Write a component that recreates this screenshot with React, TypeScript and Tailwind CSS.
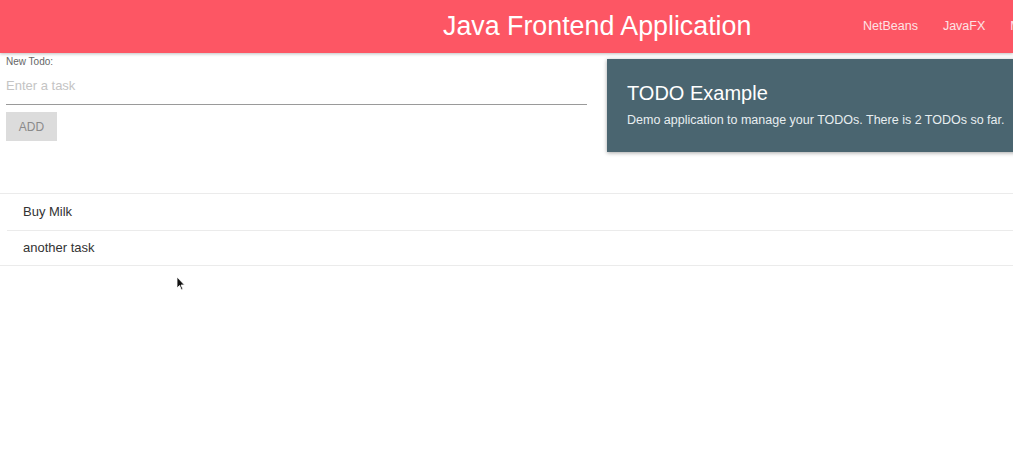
import React from "react";

export default function App() {
  return (
    <div
      className="relative w-[1013px] h-[466px] overflow-hidden bg-white"
      style={{ fontFamily: '"Liberation Sans", Arial, sans-serif' }}
    >
      <header className="h-[53px] bg-[#fd5664] flex items-center shadow-[0_1px_3px_rgba(0,0,0,0.25)] relative z-10">
        <div className="ml-[443px] w-[420px] shrink-0">
          <h1 className="text-[26.8px] leading-none text-white whitespace-nowrap">
            Java Frontend Application
          </h1>
        </div>
        <nav className="flex gap-[25px] text-[12.5px] text-[#fde3e5] whitespace-nowrap">
          <span>NetBeans</span>
          <span>JavaFX</span>
          <span>Maven</span>
        </nav>
      </header>

      <div className="flex">
        <div className="w-[581px] ml-[6px] shrink-0">
          <label className="block mt-[3px] text-[10px] leading-[12px] text-[#666]">
            New Todo:
          </label>
          <div className="h-[37px] border-b border-[#9a9a9a] flex items-center">
            <span className="text-[13px] text-[#c4c4c4]">Enter a task</span>
          </div>
          <button className="mt-[7px] w-[51px] h-[29px] bg-[#dcdcdc] text-[12px] text-[#8a8a8a] flex items-center justify-center">
            ADD
          </button>
        </div>
        <div className="ml-[20px] mt-[6px] w-[440px] h-[93px] shrink-0 bg-[#4a6570] shadow-[0_1px_4px_rgba(0,0,0,0.35)] pl-[20px] pt-[22px]">
          <div className="text-[20px] leading-[24px] text-white whitespace-nowrap">TODO Example</div>
          <div className="mt-[8px] text-[12.5px] leading-[14px] text-[#e8eef0] whitespace-nowrap">
            Demo application to manage your TODOs. There is 2 TODOs so far.
          </div>
        </div>
      </div>

      <ul className="mt-[41px] border-t border-b border-[#ebebeb]">
        <li className="h-[36px] flex items-center pl-[23px] text-[13px] text-[#333]">
          Buy Milk
        </li>
        <li className="ml-[7px] border-t border-[#ebebeb] h-[35px] flex items-center pl-[16px] text-[13px] text-[#333]">
          another task
        </li>
      </ul>

      <svg className="absolute left-[176px] top-[276px]" width="10" height="16" viewBox="0 0 10 16">
        <path d="M1 1 L1 12 L3.5 9.5 L5.5 14 L7 13.3 L5 9 L8.5 9 Z" fill="#111" stroke="#fff" strokeWidth="0.8" />
      </svg>
    </div>
  );
}
